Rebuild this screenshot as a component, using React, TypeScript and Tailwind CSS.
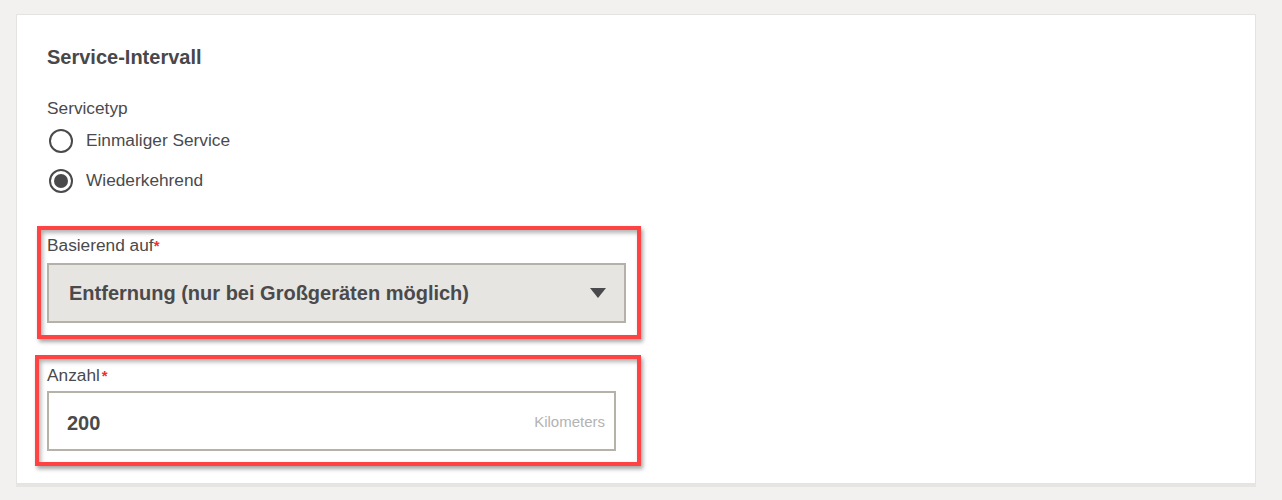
import React from "react";

function Radio({ checked, label }: { checked?: boolean; label: string }) {
  return (
    <label className="flex items-center h-[32px] gap-[13px] pl-[2px]">
      <span className="w-[24px] h-[24px] rounded-full border-2 border-[#4a4a4c] flex items-center justify-center bg-white">
        {checked && <span className="w-[14px] h-[14px] rounded-full bg-[#4a4a4c]" />}
      </span>
      <span className="text-[17.3px] text-[#4a4a4c]">{label}</span>
    </label>
  );
}

export default function App() {
  return (
    <div
      className="relative h-[500px] bg-[#f2f1ef] pt-[14px] pl-[16px] pr-[26px] overflow-hidden"
      style={{ fontFamily: '"Liberation Sans", Arial, sans-serif' }}
    >
      <div className="h-[470px] bg-white border border-[#e4e3e0] shadow-[0_3px_0_#e6e5e2] pl-[30px] pt-[30px]">
        <h2 className="text-[20px] leading-[24px] font-bold text-[#48484a]">Service-Intervall</h2>

        <div className="mt-[27px] text-[17.3px] leading-[24px] text-[#4a4a4c]">Servicetyp</div>
        <div className="mt-[5px] flex flex-col gap-[8px]">
          <Radio label="Einmaliger Service" />
          <Radio checked label="Wiederkehrend" />
        </div>

        {/* Basierend auf */}
        <div className="mt-[36px] h-[24px] text-[17.3px] leading-[24px] text-[#4a4a4c]">
          Basierend auf<span className="text-[#f03030] font-bold text-[15px] leading-none">*</span>
        </div>
        <div className="mt-[6px] w-[579px] h-[60px] bg-[#e6e5e2] border-2 border-[#b5b0a8] flex items-center justify-between pl-[20px] pr-[18px]">
          <span className="text-[20px] font-bold text-[#4a4a4c]">
            Entfernung (nur bei Großgeräten möglich)
          </span>
          <svg width="16" height="10" viewBox="0 0 16 10">
            <path d="M0 0 H16 L8 10 Z" fill="#4a4a4c" />
          </svg>
        </div>

        {/* Anzahl */}
        <div className="mt-[40px] h-[24px] text-[17.3px] leading-[24px] text-[#4a4a4c]">
          Anzahl<span className="ml-[2px] text-[#f03030] font-bold text-[15px] leading-none">*</span>
        </div>
        <div className="mt-[4px] w-[569px] h-[60px] bg-white border-2 border-[#b7b2a8] flex items-center justify-between pl-[18px] pr-[9px] pt-[3px]">
          <span className="text-[20px] font-bold text-[#4a4a4c]">200</span>
          <span className="text-[15px] text-[#b3b3b3]">Kilometers</span>
        </div>
      </div>

      {/* annotation boxes */}
      <div className="absolute left-[37px] top-[226px] w-[604px] h-[113px] border-4 border-[#ff4242] shadow-[2px_3px_4px_rgba(0,0,0,0.35),inset_2px_3px_4px_rgba(0,0,0,0.3)]" />
      <div className="absolute left-[35px] top-[355px] w-[606px] h-[111px] border-4 border-[#ff4242] shadow-[2px_3px_4px_rgba(0,0,0,0.35),inset_2px_3px_4px_rgba(0,0,0,0.3)]" />
    </div>
  );
}
